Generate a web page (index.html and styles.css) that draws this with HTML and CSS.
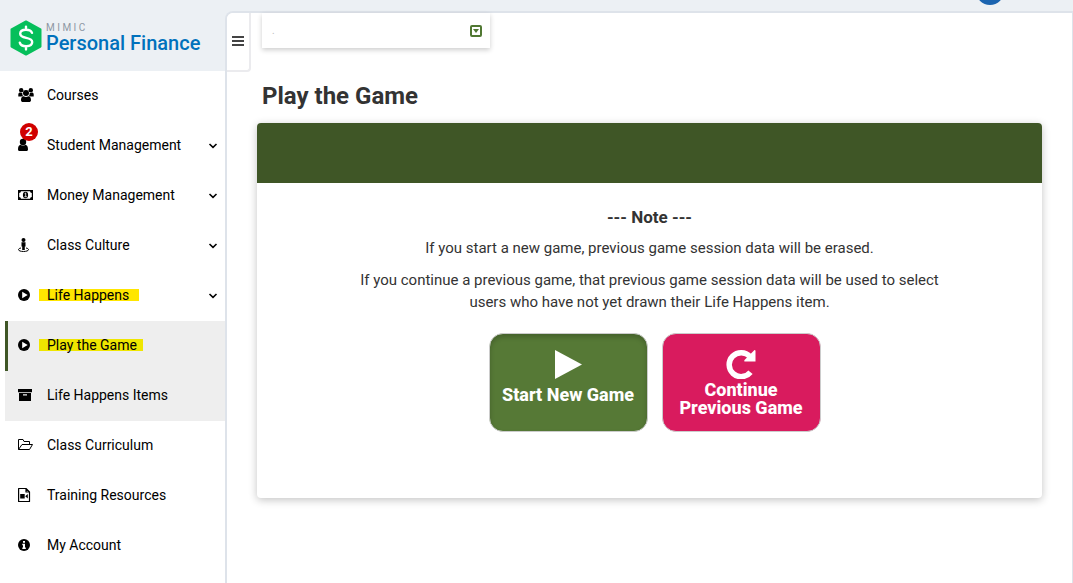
FILE: index.html
```
<!DOCTYPE html>
<html lang="en">
<head>
  <meta charset="UTF-8">
  <meta name="viewport" content="width=device-width, initial-scale=1.0">
  <title>Play the Game - Personal Finance</title>
  <link rel="stylesheet" href="styles.css">
</head>
<body>
  <aside class="sidebar">
    <a class="brand" href="#">
      <svg class="brand-logo" viewBox="0 0 32 36" aria-hidden="true">
        <path d="M16 1.500 30.500 9.500V26.500L16 34.500 1.500 26.500V9.500Z" fill="#06bf5b" stroke="#06bf5b" stroke-width="2" stroke-linejoin="round"/>
        <path d="M22 12.800C21.200 10.600 19 9.800 16 9.800c-3.400 0-5.800 1.500-5.800 4 0 5.600 12 2.600 12 8.200 0 2.700-2.600 4.200-6 4.200-3.400 0-5.800-1.200-6.400-3.600M16 6.600v3M16 26.400v3" fill="none" stroke="#fff" stroke-width="2.400" stroke-linecap="round"/>
      </svg>
      <span class="brand-text">
        <span class="brand-small">M I M I C</span>
        <span class="brand-name">Personal Finance</span>
      </span>
    </a>
    <nav>
      <ul class="menu">
        <li><a href="#">
          <svg class="icon" viewBox="0 0 16 16"><circle cx="3.200" cy="3.200" r="2.200"/><circle cx="12.800" cy="3.200" r="2.200"/><circle cx="8" cy="6" r="3"/><path d="M.3 9.500V7.500c0-1.500 1-2 2-2 .8.600 1.500.600 2 .400 0 1.500.2 2.200.8 3-.8 0-1.400.2-1.800.6zM15.700 9.500V7.500c0-1.500-1-2-2-2-.8.600-1.500.600-2 .400 0 1.500-.2 2.200-.8 3 .8 0 1.400.2 1.800.6zM3 13c0-2.500 1-3.800 2.600-3.800 1.600 1 3.200 1 4.800 0C12 9.200 13 10.500 13 13c0 1.400-.8 2-2 2H5c-1.200 0-2-.6-2-2z"/></svg>
          <span>Courses</span></a></li>
        <li><a href="#">
          <span class="icon-wrap">
            <svg class="icon" viewBox="0 0 16 16"><circle cx="5" cy="5" r="3.200"/><path d="M0 12.200C0 9.500 1 8 2.700 7.700c1.400 1.200 3.200 1.200 4.600 0 1.700.3 2.700 1.800 2.700 4.500 0 1.200-.6 1.800-1.500 1.800H1.500C.6 14 0 13.400 0 12.200z"/></svg>
            <span class="badge">2</span>
          </span>
          <span>Student Management</span>
          <svg class="chevron" viewBox="0 0 10 10"><path d="m1.500 4 3.500 3.300L8.500 4"/></svg></a></li>
        <li><a href="#">
          <svg class="icon" viewBox="0 0 16 16"><path fill-rule="evenodd" d="M0 3h15v10H0zM3 4.200A2 2 0 0 1 1.200 6v4A2 2 0 0 1 3 11.800h9A2 2 0 0 1 13.800 10V6A2 2 0 0 1 12 4.200z"/><ellipse cx="7.500" cy="8" rx="2.600" ry="3.200"/><path d="M6.700 6.600 7.700 6v3.500M6.400 9.700h2.500" fill="none" stroke="#fff" stroke-width=".8"/></svg>
          <span>Money Management</span>
          <svg class="chevron" viewBox="0 0 10 10"><path d="m1.500 4 3.500 3.300L8.500 4"/></svg></a></li>
        <li><a href="#">
          <svg class="icon" viewBox="0 0 16 16"><circle cx="5.500" cy="3" r="2"/><path d="M3.500 5.200h4v4.300h-.7V13H4.200V9.500h-.7z"/><path d="M3 11C1.300 11.300.5 11.900.5 12.600c0 1.100 2.200 1.900 5 1.900s5-.8 5-1.900c0-.7-.8-1.300-2.500-1.600" fill="none" stroke="currentColor"/></svg>
          <span>Class Culture</span>
          <svg class="chevron" viewBox="0 0 10 10"><path d="m1.500 4 3.500 3.300L8.500 4"/></svg></a></li>
        <li><a href="#">
          <svg class="icon" viewBox="0 0 16 16"><circle cx="6" cy="8" r="6"/><path d="m4.200 4.700 5.500 3.300-5.500 3.300z" fill="#fff"/></svg>
          <span class="marked">Life Happens</span>
          <svg class="chevron" viewBox="0 0 10 10"><path d="m1.500 4 3.500 3.300L8.500 4"/></svg></a>
          <ul class="submenu">
            <li><a class="active" href="#">
              <svg class="icon" viewBox="0 0 16 16"><circle cx="6" cy="8" r="6"/><path d="m4.200 4.700 5.500 3.300-5.500 3.300z" fill="#fff"/></svg>
              <span class="marked marked-dark">Play the Game</span></a></li>
            <li><a href="#">
              <svg class="icon" viewBox="0 0 16 16"><path fill-rule="evenodd" d="M0 2h14v3.200H0zM1 6h12v8H1zM5 7.200v1.200h4V7.200z"/></svg>
              <span>Life Happens Items</span></a></li>
          </ul>
        </li>
        <li><a href="#">
          <svg class="icon" viewBox="0 0 16 16"><path d="M.5 12.500v-10H5l1 2h5.500v3M.5 12.500l3.500-5h10.500l-3 5z" fill="none" stroke="currentColor" stroke-linejoin="round"/></svg>
          <span>Class Curriculum</span></a></li>
        <li><a href="#">
          <svg class="icon" viewBox="0 0 16 16"><path d="M.6 1.500H8L11.500 5v9.500H.6zM8 1.500V5h3.500" fill="none" stroke="currentColor" stroke-width="1.200" stroke-linejoin="round"/><path d="M2.200 7h4.500v4.500H2.200zM9.800 7v4.500L7.200 9.200z"/></svg>
          <span>Training Resources</span></a></li>
        <li><a href="#">
          <svg class="icon" viewBox="0 0 16 16"><circle cx="6" cy="8" r="6"/><path d="M5 4h2v1.800H5zM4.300 6.800H7v3.700h.8V12H4.300v-1.500H5V8.200h-.7z" fill="#fff"/></svg>
          <span>My Account</span></a></li>
      </ul>
    </nav>
  </aside>

  <div class="page">
    <header class="topbar"><a class="avatar" href="#" aria-label="Profile"></a></header>
    <main class="content">
      <button class="toggle" type="button" aria-label="Toggle menu">
        <svg viewBox="0 0 12 12"><path d="M0 1h12M0 5h12M0 9h12"/></svg>
      </button>
      <div class="main-column">
        <div class="class-picker">
          <select aria-label="Class"><option>.</option></select>
          <svg class="picker-icon" viewBox="0 0 12 12" aria-hidden="true"><rect x="1" y="1" width="10" height="10" rx="1" fill="none" stroke="#507832" stroke-width="2"/><path d="M3 4h6L6 8z" fill="#507832"/></svg>
        </div>
        <h1>Play the Game</h1>
        <section class="card">
          <div class="card-banner"></div>
          <div class="card-body">
            <h2>--- Note ---</h2>
            <p>If you start a new game, previous game session data will be erased.</p>
            <p>If you continue a previous game, that previous game session data will be used to select users who have not yet drawn their Life Happens item.</p>
            <div class="actions">
              <button class="game-button start" type="button">
                <svg viewBox="0 0 30 30"><path d="M2 1v29L29 15.500z"/></svg>
                Start New Game
              </button>
              <button class="game-button continue" type="button">
                <svg viewBox="0 0 30 30"><path d="M24.500 23.200A12 12 0 1 1 24 7.500" fill="none" stroke="#fff" stroke-width="5.500"/><path d="M28.500 1q1 0 1 1v10.500H19q-1.500 0-.5-1.500z"/></svg>
                Continue Previous Game
              </button>
            </div>
          </div>
        </section>
      </div>
    </main>
  </div>
</body>
</html>
```
FILE: styles.css
```
* {
  box-sizing: border-box;
}
body {
  margin: 0;
  display: flex;
  min-height: 100vh;
  font-family: Roboto, sans-serif;
  font-size: 15px;
  color: #333;
  background-color: #fff;
}
ul {
  list-style: none;
  margin: 0;
  padding: 0;
}
a {
  color: #000;
  text-decoration: none;
}
button, select {
  font-family: inherit;
}

/* sidebar */
.sidebar {
  flex: 0 0 225px;
}
.brand {
  display: flex;
  align-items: center;
  gap: 4px;
  height: 71px;
  padding: 5px 10px 0;
  background-color: #ecf0f4;
}
.brand-logo {
  width: 32px;
  height: 36px;
}
.brand-text {
  display: flex;
  flex-direction: column;
  white-space: nowrap;
}
.brand-small {
  font-size: 10px;
  line-height: 10px;
  color: #8d97a3;
}
.brand-name {
  font-size: 20px;
  line-height: 20px;
  font-weight: 500;
  color: #0071bc;
}
.menu a {
  display: flex;
  align-items: center;
  height: 50px;
  padding: 0 7px 2px 18px;
  font-size: 14px;
}
.icon {
  flex: none;
  width: 16px;
  height: 16px;
  margin-right: 13px;
  fill: currentColor;
}
.icon-wrap {
  position: relative;
  display: flex;
}
.badge {
  position: absolute;
  top: -14px;
  left: 2px;
  width: 18px;
  height: 18px;
  border-radius: 50%;
  background-color: #d00000;
  color: #fff;
  font-size: 13px;
  line-height: 18px;
  font-weight: 700;
  text-align: center;
}
.chevron {
  width: 10px;
  height: 10px;
  margin-left: auto;
  fill: none;
  stroke: #000;
  stroke-width: 1.6;
}
.marked {
  margin-left: -8px;
  padding: 0 10px 0 8px;
  line-height: 12px;
  background-color: #ffe600;
}
.marked-dark {
  padding-right: 6px;
  background-color: #efe600;
}
.submenu {
  margin-left: 5px;
  background-color: #eee;
}
.submenu a {
  padding-left: 10px;
  border-left: 3px solid transparent;
}
.submenu a.active {
  border-left-color: #3f5626;
}

/* page */
.page {
  flex: 1;
  display: flex;
  flex-direction: column;
  background-color: #ecf0f4;
}
.topbar {
  display: flex;
  justify-content: flex-end;
  align-items: flex-end;
  height: 11px;
  padding: 0 69px 6px 0;
}
.avatar {
  flex: none;
  width: 28px;
  height: 28px;
  border-radius: 50%;
  background-color: #1b64b0;
}
.content {
  flex: 1;
  display: flex;
  align-items: flex-start;
  border: solid #dee3ea;
  border-width: 2px 1px 0 2px;
  border-top-left-radius: 8px;
  background-color: #fff;
}
.toggle {
  flex: none;
  display: flex;
  align-items: center;
  width: 24px;
  height: 59px;
  padding: 0 0 0 5px;
  border: solid #ebebee;
  border-width: 0 2px 2px 0;
  border-radius: 6px 0 4px 0;
  background-color: #fff;
}
.toggle svg {
  width: 12px;
  height: 12px;
  stroke: #444;
  stroke-width: 2;
}
.main-column {
  flex: 1;
  padding: 0 30px 40px 6px;
}
.class-picker {
  position: relative;
  width: 228px;
  margin-left: 5px;
}
.class-picker select {
  display: block;
  width: 100%;
  height: 35px;
  padding: 0 10px;
  border: 0;
  appearance: none;
  background-color: #fff;
  box-shadow: 0 2px 5px rgba(0,0,0,0.2);
  font-size: 10px;
  color: #bbb;
}
.picker-icon {
  position: absolute;
  top: 12px;
  right: 8px;
  width: 12px;
  height: 12px;
  pointer-events: none;
}
h1 {
  margin: 33px 0 12px 5px;
  font-size: 24px;
  line-height: 30px;
  font-weight: 700;
}
.card {
  min-height: 375px;
  border-radius: 4px;
  overflow: hidden;
  background-color: #fff;
  box-shadow: 0 2px 8px rgba(0,0,0,0.24);
}
.card-banner {
  height: 60px;
  background-color: #3f5626;
}
.card-body {
  padding: 24px 90px;
  text-align: center;
}
h2 {
  margin: 0 0 10px;
  font-size: 17px;
  line-height: 20px;
  font-weight: 700;
}
p {
  margin: 0 0 10px;
  line-height: 22px;
}
.actions {
  display: flex;
  justify-content: center;
  gap: 14px;
  margin-top: 20px;
  padding-left: 10px;
}
.game-button {
  display: flex;
  flex-direction: column;
  align-items: center;
  width: 159px;
  height: 99px;
  padding: 15px 10px;
  border: 1px solid #ccc;
  border-radius: 14px;
  color: #fff;
  font-size: 18px;
  line-height: 18px;
  font-weight: 800;
  cursor: pointer;
}
.game-button svg {
  flex: none;
  width: 30px;
  height: 30px;
  fill: #fff;
}
.start {
  gap: 7px;
  background-color: #567936;
  box-shadow: inset 0 3px 5px rgba(0,0,0,0.2);
}
.continue {
  gap: 2px;
  background-color: #d91b5e;
}
```
